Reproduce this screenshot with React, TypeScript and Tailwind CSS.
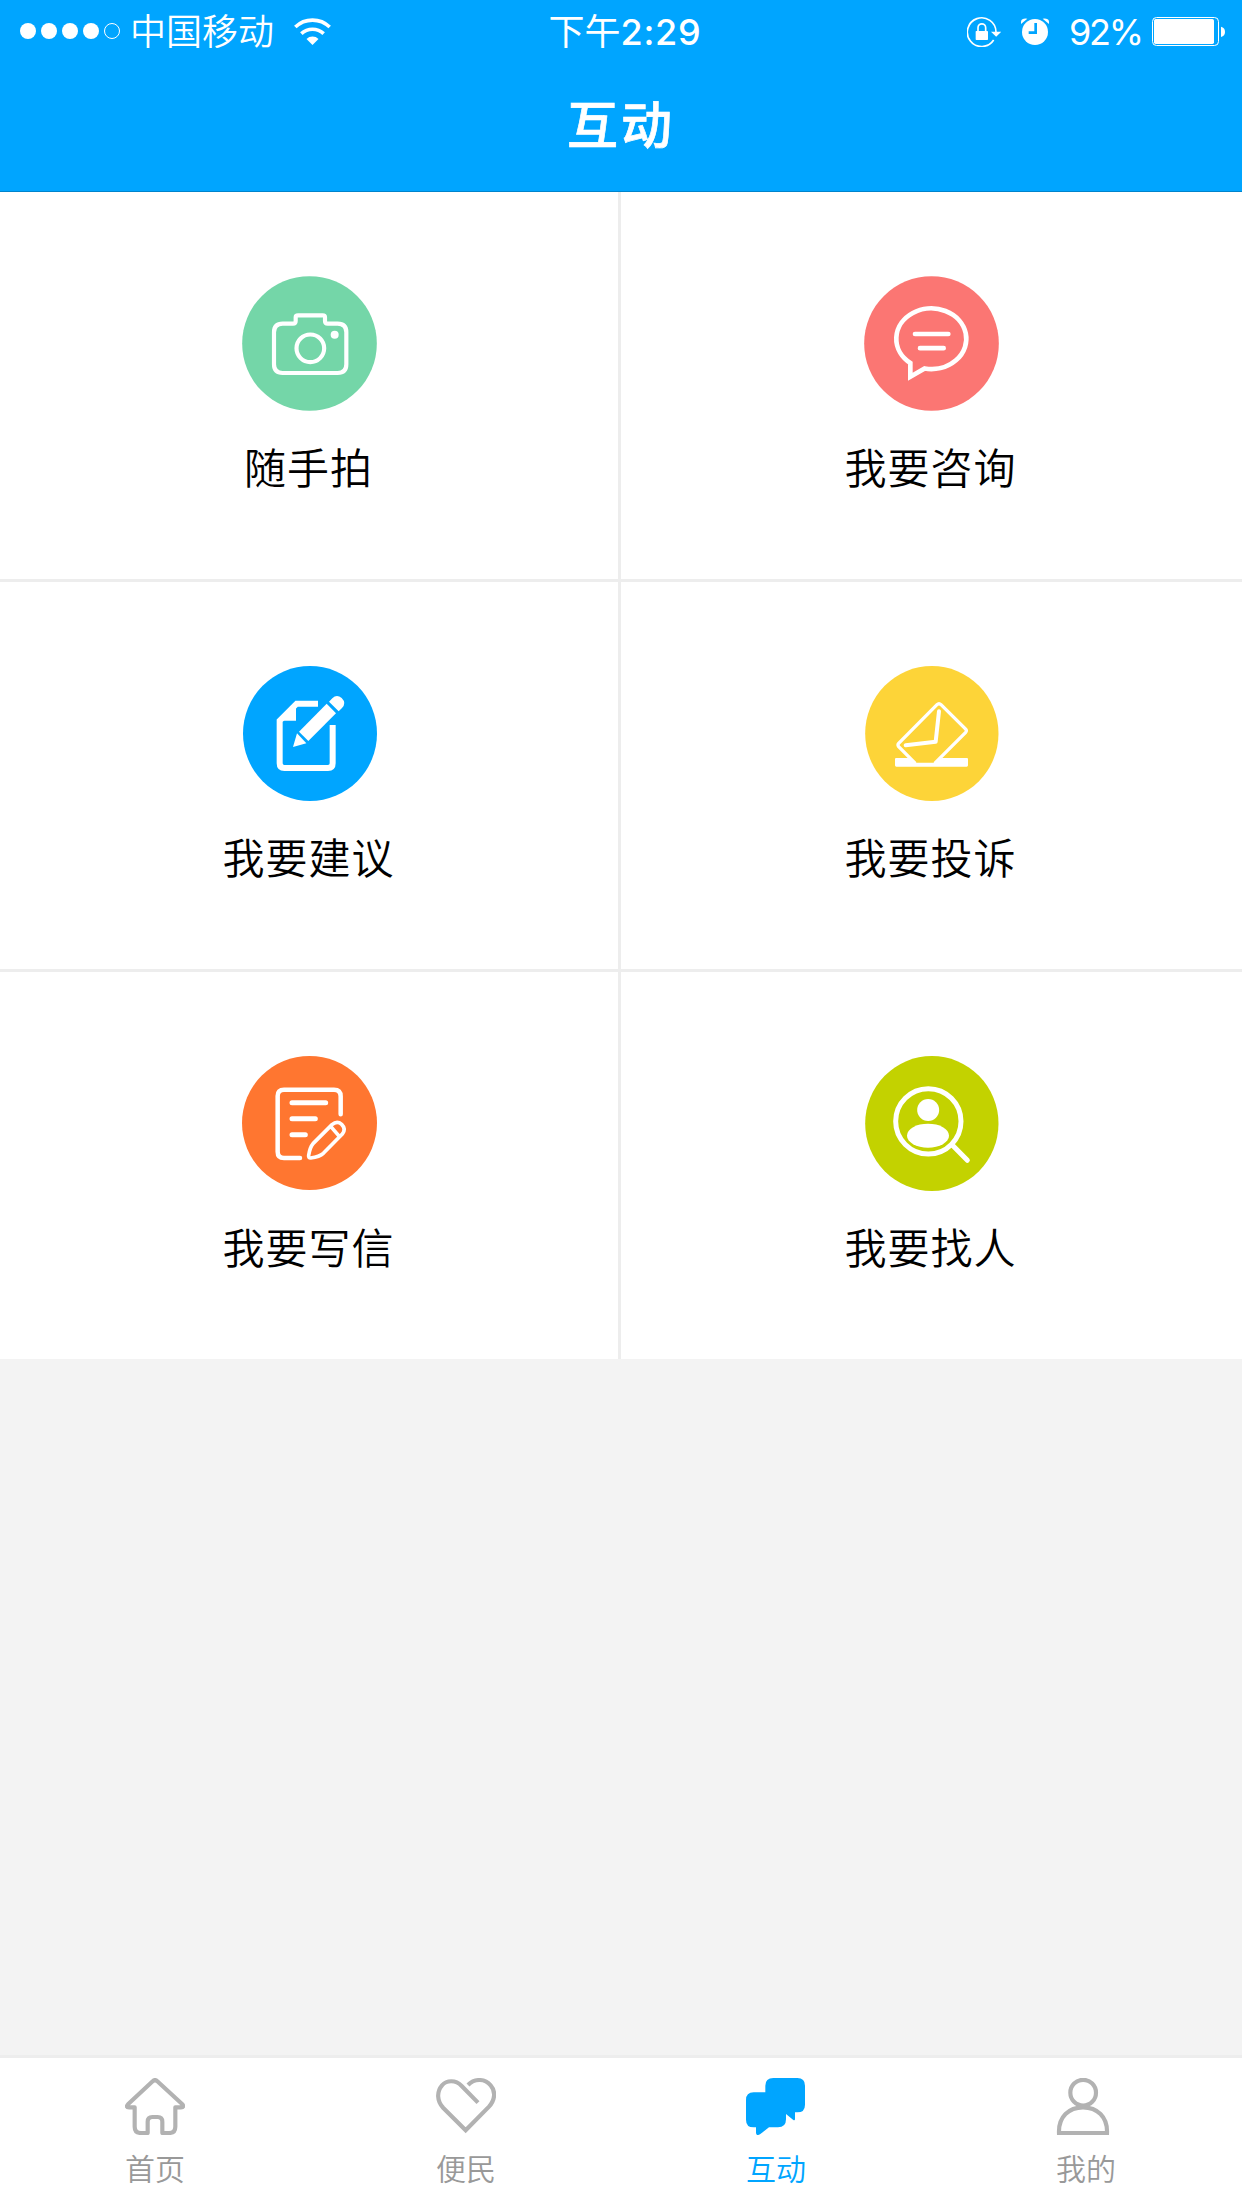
import type { ReactNode } from "react";
import clsx from "clsx";

/* ---------- status bar icons ---------- */

const WifiIcon = () => (
  <svg viewBox="882 45 111 87" className="w-[37px] h-[29px]" fill="none" stroke="#fff">
    <path d="M886 75 A74 74 0 0 1 989 75" strokeWidth="11" />
    <path d="M904 95 A49 49 0 0 1 971 95" strokeWidth="11" />
    <path d="M937.500 129 L919.500 111 A26 26 0 0 1 955.500 111 Z" fill="#fff" stroke="none" />
  </svg>
);

const RotationLockIcon = () => (
  <svg viewBox="84 42 102 93" className="w-[34px] h-[31px]" fill="none" stroke="#fff">
    <path d="M164 114 A43 43 0 1 1 171 90" strokeWidth="5" />
    <path d="M156 89 H187 L171.500 104 Z" fill="#fff" stroke="none" />
    <path d="M117 88 V77 A11.500 11.500 0 0 1 140 77 V88" strokeWidth="5" />
    <rect x="110" y="87" width="37" height="27" rx="2" fill="#fff" stroke="none" />
  </svg>
);

const AlarmIcon = () => (
  <svg viewBox="246 48 84 84" className="w-[28px] h-[28px]" fill="none">
    <circle cx="288" cy="93" r="39" fill="#fff" />
    <path d="M246 69 Q243 50 265 53 Z" fill="#fff" />
    <path d="M330 69 Q333 50 311 53 Z" fill="#fff" />
    <path d="M290 66 V95 H269" stroke="#00a5ff" strokeWidth="8" />
  </svg>
);

const BatteryIcon = () => (
  <svg viewBox="636 48 222 87" className="w-[74px] h-[29px]">
    <rect x="637.500" y="49.500" width="198" height="84" rx="12" fill="none" stroke="#fff" strokeWidth="3" />
    <rect x="642" y="54" width="180" height="75" rx="5" fill="#fff" />
    <path d="M843 77 Q855 80 855 92.500 Q855 105 843 108 Z" fill="#fff" />
  </svg>
);

/* ---------- menu icons ---------- */

const CameraIcon = () => (
  <svg viewBox="66 48 405 405" className="w-[135px] h-[135px]" fill="none" stroke="#fff" strokeWidth="12.500">
    <circle cx="268.500" cy="250.500" r="202" fill="#74d6a8" stroke="none" />
    <path d="M188 191 H219 Q227 191 227 183 V172 Q227 166 234 166 H308 Q315 166 315 172 V183 Q315 191 323 191 H353 Q379 191 379 217 V313 Q379 339 353 339 H188 Q162 339 162 313 V217 Q162 191 188 191 Z" />
    <circle cx="271" cy="265" r="41.500" />
    <circle cx="344" cy="224" r="12" fill="#fff" stroke="none" />
  </svg>
);

const ConsultIcon = () => (
  <svg viewBox="102 48 405 405" className="w-[135px] h-[135px]" fill="none" stroke="#fff" strokeWidth="14">
    <circle cx="304.500" cy="250.500" r="202" fill="#fb7673" stroke="none" />
    <path d="M241 309 V350 L284 325.500 A105 91 0 1 0 241 309 Z" />
    <path d="M255 222 H355 M270 264.500 H341" strokeLinecap="round" />
  </svg>
);

const SuggestIcon = () => (
  <svg viewBox="96 48 405 405" className="w-[135px] h-[135px]" fill="none">
    <ellipse cx="300" cy="250.500" rx="201" ry="202.500" fill="#00a5ff" />
    <path d="M324 161 H260 L209 212 V340 Q209 354 223 354 H354 Q368 354 368 340 V225" stroke="#fff" strokeWidth="18" />
    <path d="M204 212 L258 158 V212 Z" fill="#fff" />
    <path d="M350 161 L378 190 L295 273 L267 245 Z" fill="#fff" />
    <path d="M261 250 L289 280 L249 291 Z" fill="#fff" />
    <path d="M357 155 L367 145 Q380 132 395 144 Q410 159 396 174 L386 184 Z" fill="#fff" />
  </svg>
);

const ComplainIcon = () => (
  <svg viewBox="102 48 405 405" className="w-[135px] h-[135px]" fill="none">
    <ellipse cx="305.500" cy="250.500" rx="200" ry="202.500" fill="#fdd438" />
    <path d="M198 324 H235 L258 338 H312 L336 324 H411 Q414 324 414 328 V346 Q414 350 410 350 H199 Q195 350 195 346 V328 Q195 324 198 324 Z" fill="#fff" />
    <path d="M256 340 L206 290 Q202 285 206 280 L321 164 Q327 158 333 164 L407 237 Q411 242 407 247 L314 340" stroke="#fff" strokeWidth="10" />
    <path d="M327 184 L317 275 L227 286" stroke="#fff" strokeWidth="12" strokeLinecap="round" strokeLinejoin="round" />
  </svg>
);

const LetterIcon = () => (
  <svg viewBox="96 48 405 405" className="w-[135px] h-[135px]" fill="none" stroke="#fff" strokeLinecap="round">
    <ellipse cx="298.500" cy="249" rx="202.500" ry="201" fill="#ff7630" stroke="none" />
    <path d="M392 223 V169 Q392 149 372 149 H222 Q203 149 203 168 V335 Q203 354 222 354 H270" strokeWidth="13.500" />
    <path d="M246 188 H347 M246 236 H316 M246 284 H286" strokeWidth="15" />
    <path d="M366 254 Q381 241 395 253 Q409 267 397 282 L340 340 Q329 350 302 354 Q295 354 296 346 Q300 321 309 311 Z M362 259 L386 287" strokeWidth="11" strokeLinejoin="round" />
  </svg>
);

const FindPersonIcon = () => (
  <svg viewBox="102 48 405 405" className="w-[135px] h-[135px]" fill="none">
    <ellipse cx="305.500" cy="250.500" rx="200" ry="202.500" fill="#c3d200" />
    <circle cx="295" cy="244" r="98" stroke="#fff" strokeWidth="15" />
    <circle cx="294.500" cy="210" r="33" fill="#fff" />
    <ellipse cx="294" cy="287" rx="63" ry="36" fill="#fff" />
    <path d="M366 314 L412 361" stroke="#fff" strokeWidth="15" strokeLinecap="round" />
  </svg>
);

/* ---------- tab icons ---------- */

const HomeIcon = () => (
  <svg viewBox="75 114 180 171" className="w-[60px] h-[57px]" fill="none" stroke="#b2b2b2" strokeWidth="12.500" strokeLinejoin="round">
    <path d="M104 202 H87 Q76 202 84 193 L158 124 Q165 117 172 124 L247 193 Q254 202 243 202 H226 V260 Q226 279 207 279 H187 V245 Q187 231 173 231 H157 Q143 231 143 245 V279 H123 Q104 279 104 260 Z" />
  </svg>
);

const HeartIcon = () => (
  <svg viewBox="1008 114 180 171" className="w-[60px] h-[57px]" fill="none" stroke="#b2b2b2" strokeWidth="12.500">
    <path d="M1134 188 L1085 138 C1067 119 1040 120 1026 136 C1010 155 1010 182 1030 204 L1097 271 L1167 200 C1186 179 1187 153 1172 136 C1155 116 1125 114 1104 135" />
  </svg>
);

const ChatIcon = () => (
  <svg viewBox="78 114 180 171" className="w-[60px] h-[57px]" fill="#00a5ff">
    <path d="M160 114 H232 Q255 114 255 137 V194 Q255 217 232 217 H225 V237 Q225 243 219 239 L198 222 V238 Q198 262 174 262 H147 L120 283 Q108 289 108 278 V262 H101 Q78 262 78 239 V180 Q78 157 101 157 H136 V137 Q136 114 160 114 Z" />
  </svg>
);

const MineIcon = () => (
  <svg viewBox="1008 114 180 171" className="w-[60px] h-[57px]" fill="none" stroke="#b2b2b2" strokeWidth="12.500">
    <circle cx="1089.500" cy="158" r="38.500" />
    <path d="M1017 279 C1015 230 1047 202 1089 202 C1131 202 1163 230 1161 279 Z" />
  </svg>
);

const menuItems: { label: string; icon: ReactNode }[] = [
  { label: "随手拍", icon: <CameraIcon /> },
  { label: "我要咨询", icon: <ConsultIcon /> },
  { label: "我要建议", icon: <SuggestIcon /> },
  { label: "我要投诉", icon: <ComplainIcon /> },
  { label: "我要写信", icon: <LetterIcon /> },
  { label: "我要找人", icon: <FindPersonIcon /> },
];

const tabs: { label: string; icon: ReactNode; active?: boolean }[] = [
  { label: "首页", icon: <HomeIcon /> },
  { label: "便民", icon: <HeartIcon /> },
  { label: "互动", icon: <ChatIcon />, active: true },
  { label: "我的", icon: <MineIcon /> },
];

function StatusBar() {
  return (
    <div className="grid grid-cols-[1fr_auto_1fr] items-center h-[60px] pl-5 pr-4 text-white text-[36px] leading-[60px]">
      <div className="flex items-center">
        <div className="flex gap-[5px]">
          {[0, 1, 2, 3].map((i) => (
            <span key={i} className="size-4 rounded-full bg-white" />
          ))}
          <span className="size-4 rounded-full border border-white" />
        </div>
        <span className="ml-[10px] mr-5 pt-[2px] font-[350]">中国移动</span>
        <WifiIcon />
      </div>
      <div className="pt-[2px] pl-1">
        下午<span className="font-medium tracking-[0.8px]">2:29</span>
      </div>
      <div className="flex items-center justify-end">
        <RotationLockIcon />
        <span className="ml-5">
          <AlarmIcon />
        </span>
        <span className="ml-5 pt-[2px] tracking-[-2.2px]">92%</span>
        <span className="ml-[10px]">
          <BatteryIcon />
        </span>
      </div>
    </div>
  );
}

export default function App() {
  return (
    <div className="flex flex-col w-[1242px] h-[2208px] bg-[#f3f3f3] font-['Inter','Noto_Sans_CJK_SC',sans-serif]">
      <header className="h-[192px] shrink-0 bg-[#00a5ff] border-b border-[#0084cc]">
        <StatusBar />
        <h1 className="pt-[28px] text-center text-white text-[51px] leading-[76px] tracking-[3px] font-medium [-webkit-text-stroke:0.7px_white]">
          互动
        </h1>
      </header>

      <main className="grid grid-cols-2">
        {menuItems.map((item, i) => (
          <div
            key={item.label}
            className={clsx(
              "flex flex-col items-center pt-[84px] bg-white border-[#ededed]",
              i % 2 === 0 && "border-r-[3px] pl-px",
              i < 4 ? "h-[390px] border-b-[3px]" : "h-[387px]"
            )}
          >
            {item.icon}
            <span className="mt-[27px] pr-[2px] text-[42px] leading-[62px] tracking-[1px] font-[350] text-black">
              {item.label}
            </span>
          </div>
        ))}
      </main>

      <nav className="mt-auto h-[153px] grid grid-cols-[310px_312px_308px_312px] bg-white border-t-[3px] border-[#ededed]">
        {tabs.map((tab) => (
          <div
            key={tab.label}
            className={clsx("flex flex-col items-center pt-5", tab.active ? "text-[#00a5ff]" : "text-[#999]")}
          >
            {tab.icon}
            <span className="mt-3 text-[30px] leading-[44px] font-[350]">{tab.label}</span>
          </div>
        ))}
      </nav>
    </div>
  );
}
